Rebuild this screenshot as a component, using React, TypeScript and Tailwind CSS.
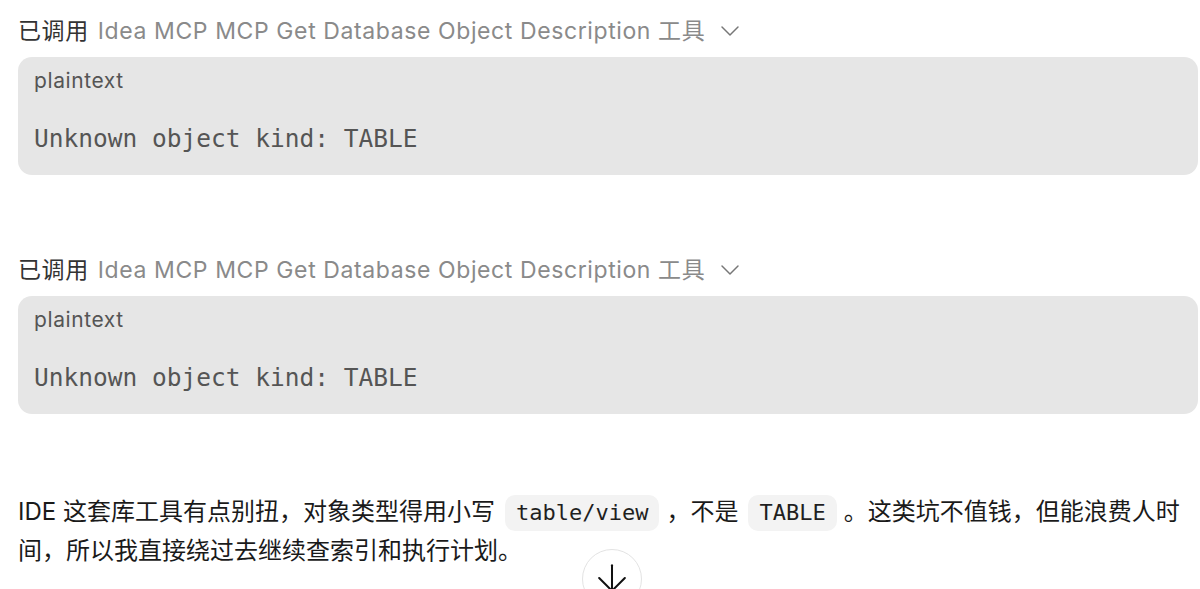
import { ArrowDown, ChevronDown } from "lucide-react";

const sans = "font-['Inter','Noto_Sans_CJK_SC',sans-serif]";
const mono = "font-['DejaVu_Sans_Mono','Noto_Sans_CJK_SC',monospace]";

function ToolCall() {
  return (
    <div className="flex flex-col">
      {/* Header */}
      <div className="flex items-center h-[26px] text-[23px] leading-[26px] tracking-[0.6px]">
        <span className="text-[#333333]">已调用</span>
        <span className="ml-[9px] text-[#8a8a8a]">Idea MCP MCP Get Database Object Description 工具</span>
        <ChevronDown size={32} strokeWidth={1.1} className="ml-[9px] text-[#777777]" />
      </div>

      {/* Output block */}
      <div className="mt-[13px] h-[118px] rounded-[14px] bg-[#e6e6e6] pl-[16px] pt-[12px]">
        <div className="text-[21px] leading-[24px] tracking-[0.6px] text-[#555555]">plaintext</div>
        <div className={`${mono} mt-[31px] text-[24.5px] leading-[30px] text-[#555555]`}>
          Unknown object kind: TABLE
        </div>
      </div>
    </div>
  );
}

function Code({ children }: { children: string }) {
  return (
    <code className={`${mono} ml-[10px] mr-[7px] inline-block rounded-[10px] bg-[#f3f3f3] px-[11px] py-[4px] align-middle text-[22px] leading-[28px] text-[#1f1f1f]`}>
      {children}
    </code>
  );
}

export default function App() {
  return (
    <div className={`${sans} relative h-[589px] w-[1200px] overflow-hidden bg-white`}>
      <div className="flex flex-col pl-[18px] pr-[2px] pt-[18px]">
        <ToolCall />
        <div className="mt-[82px]">
          <ToolCall />
        </div>

        <p className="mt-[78px] w-[1175px] text-[24px] leading-[39px] text-[#1a1a1a]">
          IDE 这套库工具有点别扭，对象类型得用小写<Code>table/view</Code>，不是<Code>TABLE</Code>。这类坑不值钱，但能浪费人时间，所以我直接绕过去继续查索引和执行计划。
        </p>
      </div>

      {/* Scroll to bottom button */}
      <button className="absolute left-[582px] top-[549px] flex h-[60px] w-[60px] items-start justify-center rounded-full border border-[#e3e3e3] bg-white pt-[6px]">
        <ArrowDown size={44} strokeWidth={1.1} className="text-[#111111]" />
      </button>
    </div>
  );
}
